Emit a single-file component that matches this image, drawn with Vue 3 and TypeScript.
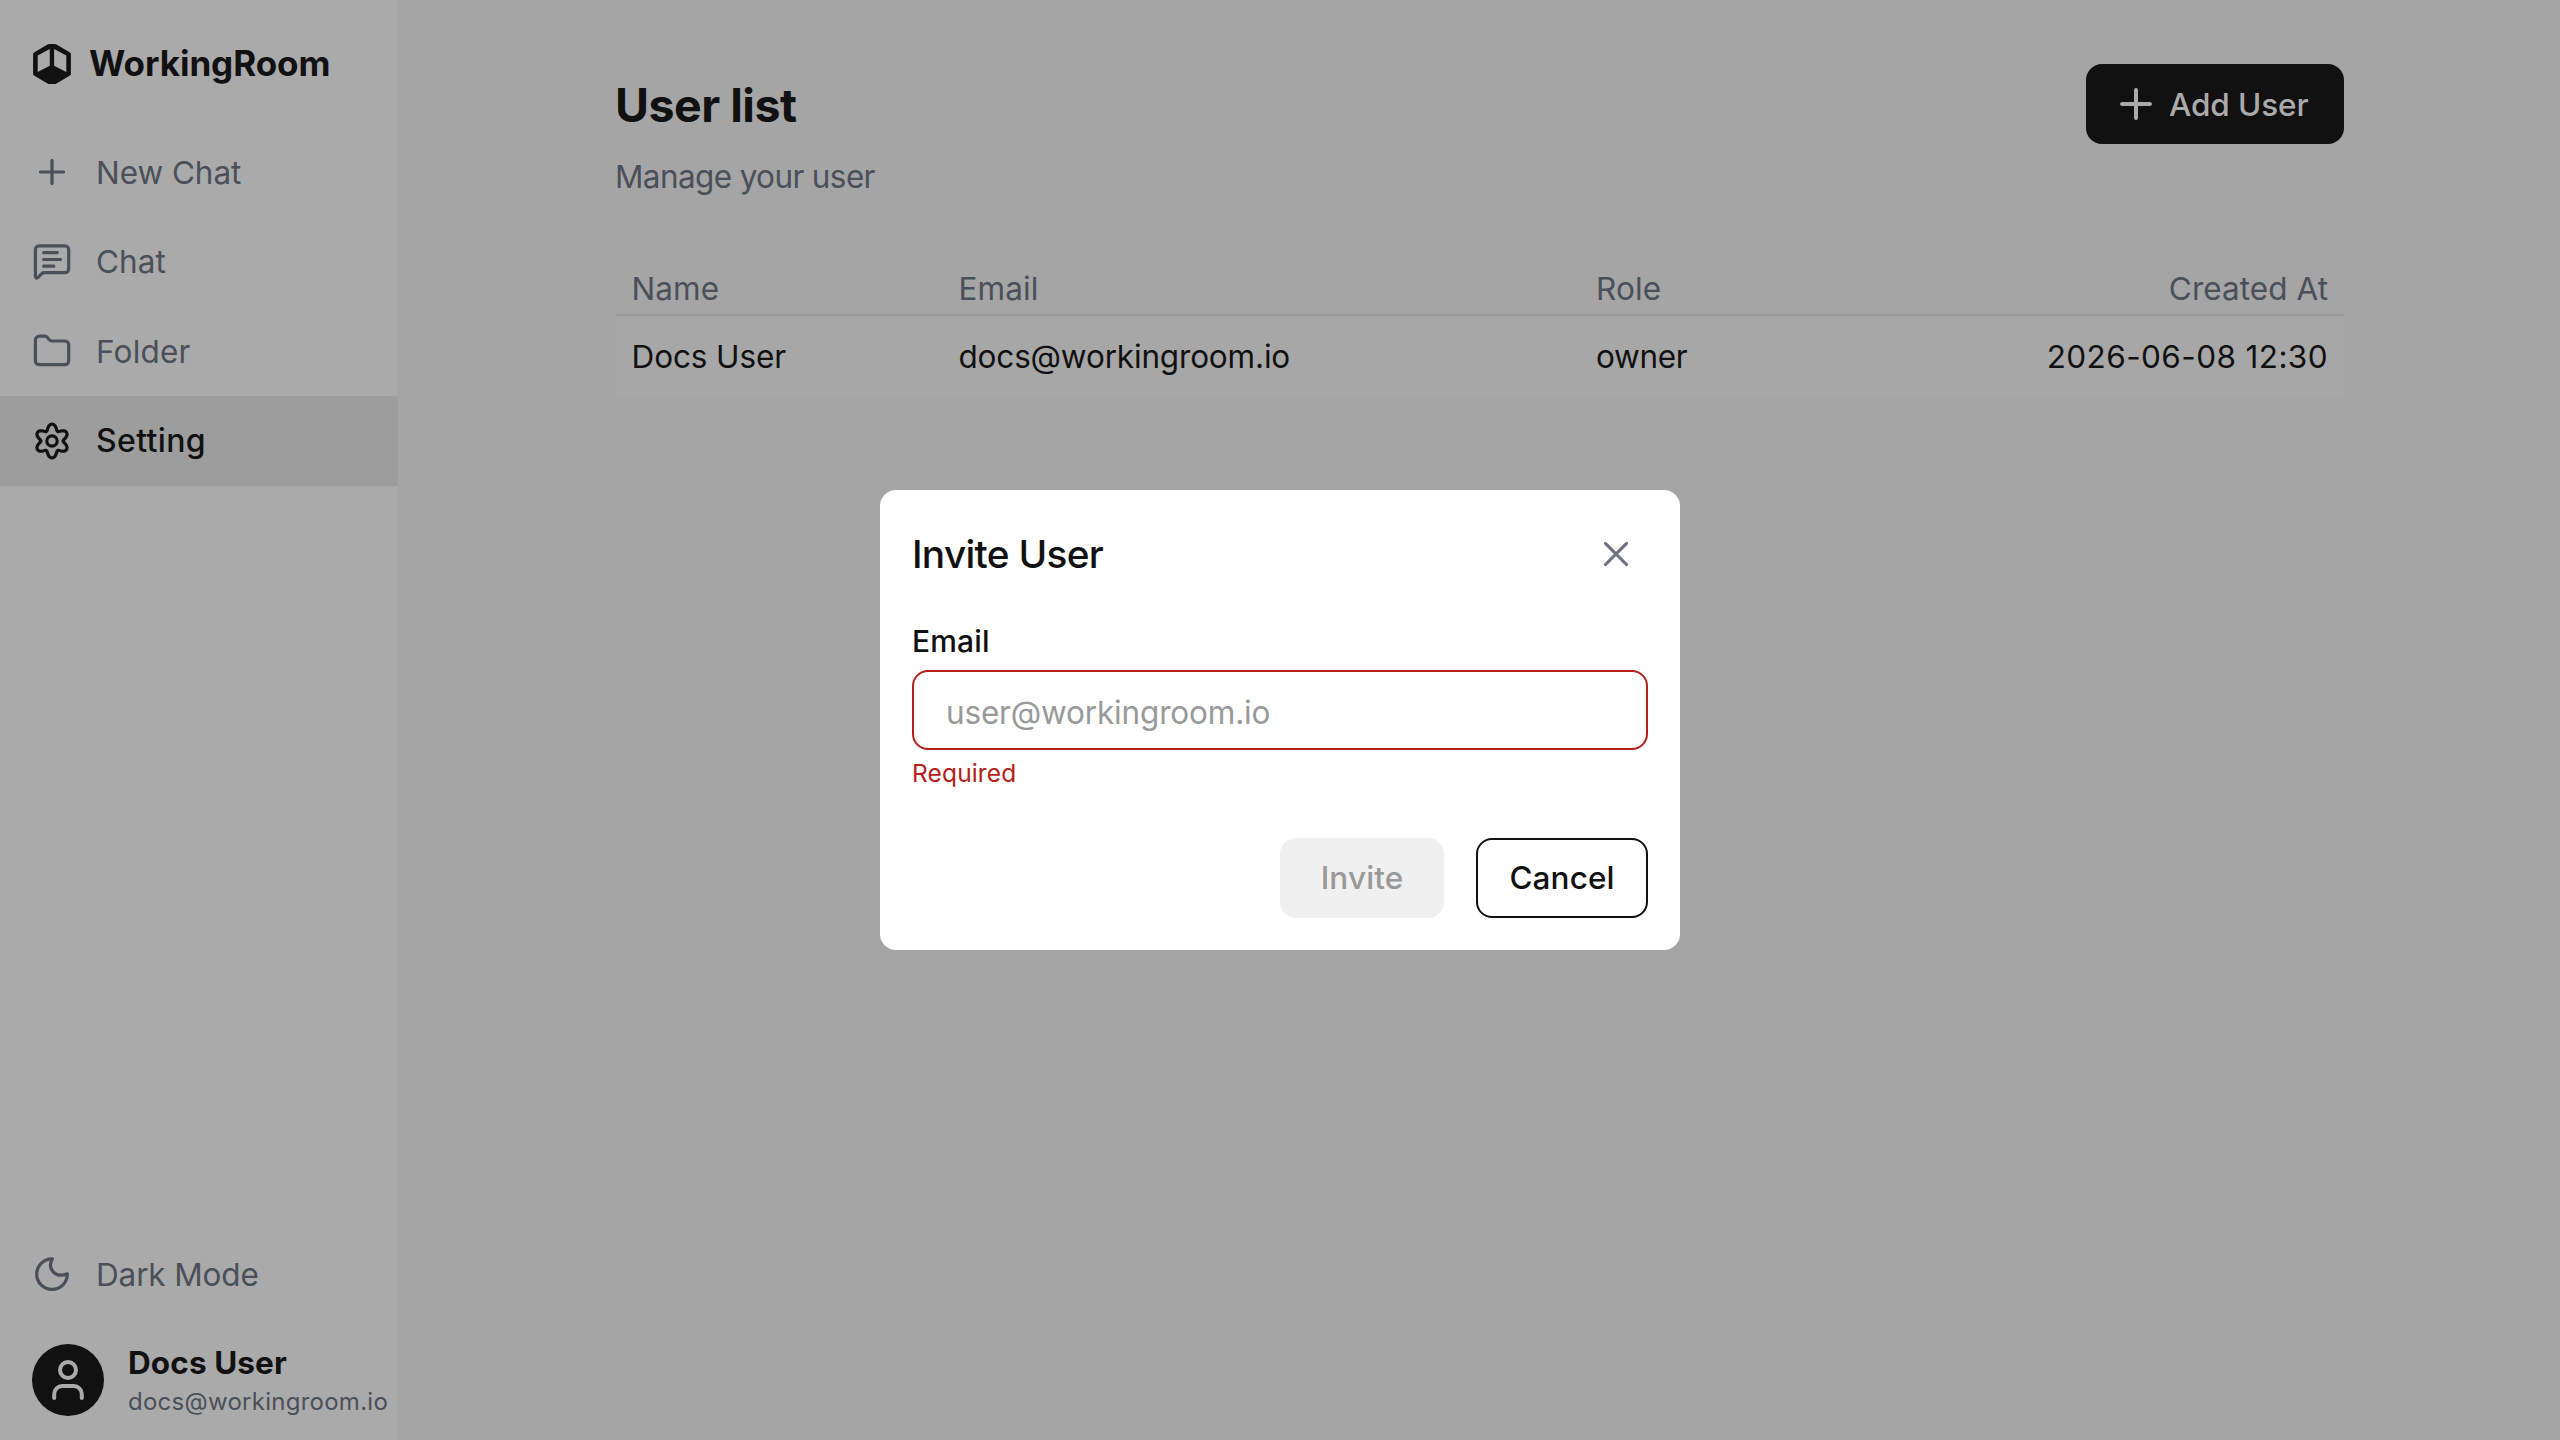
<script setup lang="ts">
interface NavItem { id: string; label: string; active?: boolean; spacing: number }
const nav: NavItem[] = [
  { id: 'plus', label: 'New Chat', spacing: -0.07 },
  { id: 'chat', label: 'Chat', spacing: 0.1 },
  { id: 'folder', label: 'Folder', spacing: 0.2 },
  { id: 'gear', label: 'Setting', active: true, spacing: 0.35 },
]

// Six-toothed gear outline, traced in polar coordinates
const gear = (() => {
  const pts: string[] = []
  for (let a = 0; a < 360; a += 3) {
    const t = (a * Math.PI) / 180
    const r = 14.2 + 2.9 * Math.cos(6 * t) - 0.25 * Math.cos(12 * t)
    pts.push(`${(20 + r * Math.sin(t)).toFixed(2)} ${(20 - r * Math.cos(t)).toFixed(2)}`)
  }
  return `M${pts.join('L')}Z`
})()
</script>

<template>
  <div class="app">
    <aside class="sidebar">
      <div class="brand">
        <svg class="logo" viewBox="0 0 40 40"><path fill="currentColor" fill-rule="evenodd" d="M17.3 0h5.4q1 .1 1.8.6L38 8.4q.9.6.9 1.6v20q0 1-.9 1.6L24.5 39.4q-.8.5-1.8.6h-5.4q-1-.1-1.8-.6L2 31.6Q1.1 31 1.1 30V10q0-1 .9-1.6L15.5.6q.8-.5 1.8-.6zM5.7 11.4V28L17.8 21.8V5zM34.3 11.4V28L22.1 21.8V5z" /></svg>
        <span class="brand-name">WorkingRoom</span>
      </div>
      <nav>
        <a v-for="item in nav" :key="item.id" class="nav-item" :class="{ active: item.active }">
          <svg class="icon" viewBox="0 0 40 40">
            <path v-if="item.id === 'plus'" d="M20 8.4V31.6M8.4 20H31.6" />
            <template v-else-if="item.id === 'chat'">
              <path d="M7 4.8H33a3.7 3.7 0 0 1 3.7 3.7V28a3.7 3.7 0 0 1-3.7 3.7H12q-1.2 0-2 .8L5.7 36.6a1.3 1.3 0 0 1-2.3-.9V8.5A3.7 3.7 0 0 1 7 4.8z" />
              <path d="M11.7 11.7H25.2M11.7 18.5H28.5M11.7 25.2H21.8" />
            </template>
            <path v-else-if="item.id === 'folder'" d="M3.4 9.2A4 4 0 0 1 7.4 5.2h5.2a3.5 3.5 0 0 1 2.9 1.4l1.6 2a3.5 3.5 0 0 0 2.8 1.4H33a3.7 3.7 0 0 1 3.7 3.7V30a3.7 3.7 0 0 1-3.7 3.7H7.1A3.7 3.7 0 0 1 3.4 30z" />
            <template v-else>
              <path :d="gear" />
              <circle cx="20" cy="20" r="5.2" />
            </template>
          </svg>
          <span class="nav-label" :style="{ letterSpacing: item.spacing + 'px' }">{{ item.label }}</span>
        </a>
      </nav>
      <div class="side-foot">
        <a class="nav-item">
          <svg class="icon" viewBox="0 0 40 40"><path d="M20.4 4.8C17.8 9.5 17.8 14.5 21.5 18.2C25.2 21.6 30.5 21.8 35.3 19.8A15.3 15.3 0 1 1 20.4 4.8z" /></svg>
          <span class="dark-label">Dark Mode</span>
        </a>
        <div class="account">
          <svg class="avatar" viewBox="0 0 72 72">
            <circle cx="36" cy="36" r="36" fill="#111" />
            <g fill="none" stroke="#aaa" stroke-width="4" stroke-linecap="round"><circle cx="36" cy="26" r="8" /><path d="M22.2 54v-4a8 8 0 0 1 8-8h11.6a8 8 0 0 1 8 8v4" /></g>
          </svg>
          <div class="who"><div class="who-name">Docs User</div><div class="who-mail">docs@workingroom.io</div></div>
        </div>
      </div>
    </aside>

    <main class="main">
      <header class="head">
        <div class="titles">
          <h1>User list</h1>
          <p class="sub">Manage your user</p>
        </div>
        <button class="add">
          <svg viewBox="0 0 32 32"><path d="M16 2V30M2 16H30" /></svg>
          <span>Add User</span>
        </button>
      </header>
      <div class="table">
        <div class="tr th">
          <span class="c-name">Name</span><span class="c-mail">Email</span><span class="c-role">Role</span><span class="c-date">Created At</span>
        </div>
        <div class="tr td">
          <span class="c-name">Docs User</span><span class="c-mail">docs@workingroom.io</span><span class="c-role">owner</span><span class="c-date">2026-06-08 12:30</span>
        </div>
      </div>
    </main>

    <div class="overlay">
      <section class="modal">
        <div class="modal-head">
          <h2>Invite User</h2>
          <svg class="close" viewBox="0 0 24 24"><path d="M1.4 1.4L22.6 22.6M22.6 1.4L1.4 22.6" /></svg>
        </div>
        <label class="label">Email</label>
        <div class="field">user@workingroom.io</div>
        <p class="error">Required</p>
        <div class="actions">
          <button class="btn invite">Invite</button>
          <button class="btn cancel">Cancel</button>
        </div>
      </section>
    </div>
  </div>
</template>

<style>
body { margin: 0; overflow: hidden; }
</style>

<style scoped>
* { box-sizing: border-box; }
.app { position: relative; display: flex; width: 2560px; height: 1440px; background: #a5a5a5; color: #111; font: 400 31.5px/40px Inter, "Liberation Sans", sans-serif; letter-spacing: -0.1px; }
h1, h2, p { margin: 0; }
button { margin: 0; font: inherit; letter-spacing: inherit; color: inherit; border: 0; }
.sidebar { display: flex; flex-direction: column; flex: none; width: 398px; background: #aaa; white-space: nowrap; }
.brand { display: flex; align-items: center; height: 127px; padding-left: 32px; gap: 17px; }
.logo { width: 40px; height: 40px; }
.brand-name { padding-bottom: 2px; font-size: 35px; font-weight: 700; letter-spacing: -0.05px; }
.nav-item { display: flex; align-items: center; height: 89.66px; padding-left: 32px; gap: 24px; color: #4b4f58; }
.nav-item.active { background: #9d9d9d; color: #111; font-weight: 500; font-size: 32px; }
.nav-label, .dark-label { padding-top: 2px; }
.active .nav-label { padding-top: 0; }
.dark-label { letter-spacing: -0.14px; }
.icon { width: 40px; height: 40px; fill: none; stroke: currentColor; stroke-width: 3.2; stroke-linecap: round; stroke-linejoin: round; }
.side-foot { margin-top: auto; }
.account { display: flex; align-items: center; gap: 24px; padding: 19.5px 0 18.5px 32px; }
.avatar { width: 72px; height: 72px; flex: none; }
.who { padding-top: 5px; }
.who-name { font-weight: 700; letter-spacing: 0.1px; line-height: 38px; }
.who-mail { font-size: 24px; letter-spacing: 0.26px; line-height: 40px; color: #4b4f58; }

.main { flex: 1; padding: 64px 216px 0 218px; }
.head { display: flex; justify-content: space-between; align-items: flex-start; }
.titles { margin-left: -1px; }
h1 { font-size: 46.5px; line-height: 82px; font-weight: 700; letter-spacing: -0.5px; }
.sub { margin-top: 11px; color: #4b4f58; letter-spacing: -0.62px; }
.add { display: flex; align-items: center; width: 258px; height: 80px; padding: 1px 0 0 34px; gap: 17px; border-radius: 16px; background: #111; color: #aaa; font-weight: 500; }
.add svg { width: 32px; height: 32px; margin-top: -1px; fill: none; stroke: currentColor; stroke-width: 4; stroke-linecap: round; }
.table { margin-top: 66px; }
.tr { display: flex; align-items: center; padding: 0 16px 0 15.5px; }
.th { height: 53px; border-bottom: 2px solid #999; color: #4b4f58; letter-spacing: 0.1px; }
.td { height: 82px; background: #a7a7a7; }
.c-name { width: 327px; }
.c-mail { width: 637.5px; }
.td .c-mail { letter-spacing: -0.17px; }
.td .c-role { letter-spacing: -0.35px; }
.c-date { margin-left: auto; }
.th .c-date { letter-spacing: 0.05px; }
.td .c-date { letter-spacing: 0.4px; }

.overlay { position: absolute; inset: 0; display: flex; align-items: center; justify-content: center; }
.modal { display: flex; flex-direction: column; width: 800px; height: 460px; padding: 32px; border-radius: 16px; background: #fff; }
.modal-head { display: flex; align-items: center; justify-content: space-between; height: 64px; padding-right: 20px; }
h2 { font-size: 38.8px; font-weight: 500; letter-spacing: -0.7px; }
.close { width: 24px; height: 24px; overflow: visible; fill: none; stroke: #6b7280; stroke-width: 3; stroke-linecap: round; }
.label { margin-top: 30px; font-size: 30px; font-weight: 500; line-height: 51px; letter-spacing: 0.17px; }
.field { height: 80px; margin-top: 3px; padding: 3px 32px 0; border: 2px solid #b4201a; border-radius: 16px; line-height: 76px; color: #999; letter-spacing: -0.17px; }
.error { margin-top: 8px; font-size: 24.5px; line-height: 30px; letter-spacing: 0.15px; color: #b4201a; }
.actions { display: flex; justify-content: flex-end; gap: 32px; margin-top: auto; }
.btn { height: 80px; padding: 0; border-radius: 16px; font-weight: 500; background: #fff; letter-spacing: 0.1px; }
.invite { width: 164px; background: #f0f0f0; color: #999; }
.cancel { width: 172px; border: 2px solid #111; }
</style>
